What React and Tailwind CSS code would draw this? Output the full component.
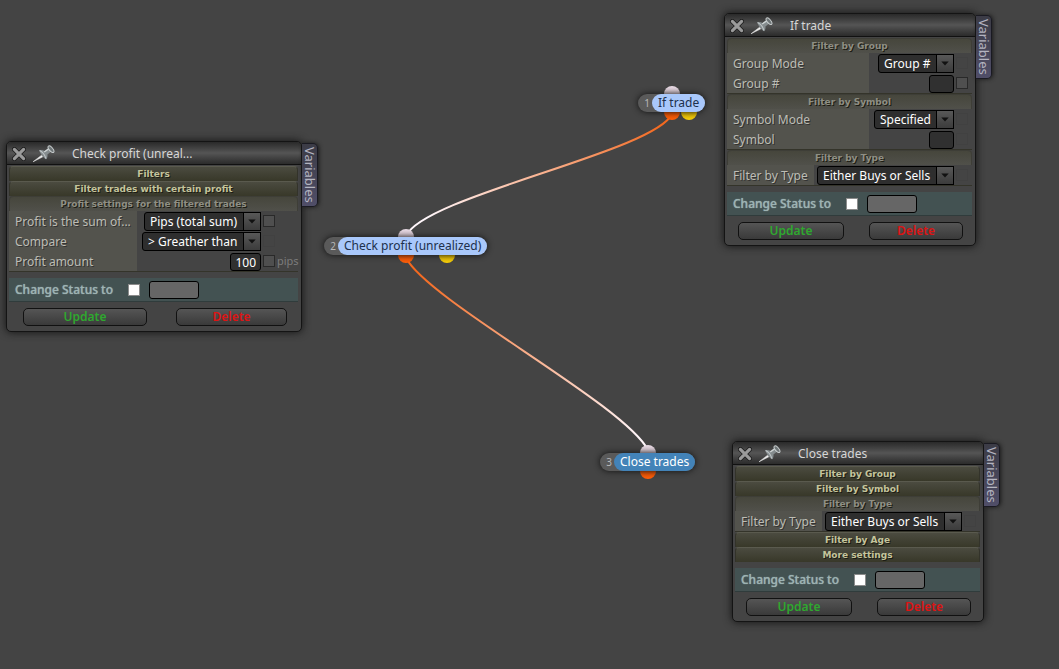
import React from 'react';
import clsx from 'clsx';

const windows = [
  {
    id: 'profit',
    title: 'Check profit (unreal...',
    position: 'left-[6px] top-[141px]',
    width: 'w-[296px]',
    sideWidth: 'w-[37px]',
    groups: [
      { title: 'Filters', rows: [] },
      { title: 'Filter trades with certain profit', rows: [] },
      {
        title: 'Profit settings for the filtered trades',
        labelWidth: 'w-32',
        rows: [
          { label: 'Profit is the sum of...', type: 'select', value: 'Pips (total sum)', check: true },
          { label: 'Compare', type: 'select', value: '> Greather than' },
          { label: 'Profit amount', type: 'text', value: '100', check: true, unit: 'pips' },
        ],
      },
    ],
    buttons: ['w-[124px]', 'w-[111px]'],
    buttonRow: 'pl-[14px] pr-[11px]',
  },
  {
    id: 'if',
    title: 'If trade',
    position: 'left-[724px] top-[13px]',
    width: 'w-[252px]',
    sideWidth: 'w-[18px]',
    groups: [
      {
        title: 'Filter by Group',
        labelWidth: 'w-[142px]',
        rows: [
          { label: 'Group Mode', type: 'select', value: 'Group #' },
          { label: 'Group #', type: 'text', value: '', check: true },
        ],
      },
      {
        title: 'Filter by Symbol',
        labelWidth: 'w-[142px]',
        rows: [
          { label: 'Symbol Mode', type: 'select', value: 'Specified' },
          { label: 'Symbol', type: 'text', value: '' },
        ],
      },
      {
        title: 'Filter by Type',
        labelWidth: 'w-[87px]',
        rows: [{ label: 'Filter by Type', type: 'select', value: 'Either Buys or Sells' }],
      },
    ],
    buttons: ['w-[106px]', 'w-[94px]'],
    buttonRow: 'pl-[11px] pr-[9px]',
  },
  {
    id: 'close',
    title: 'Close trades',
    position: 'left-[732px] top-[441px]',
    width: 'w-[252px]',
    sideWidth: 'w-[18px]',
    groups: [
      { title: 'Filter by Group', rows: [] },
      { title: 'Filter by Symbol', rows: [] },
      {
        title: 'Filter by Type',
        labelWidth: 'w-[87px]',
        rows: [{ label: 'Filter by Type', type: 'select', value: 'Either Buys or Sells' }],
      },
      { title: 'Filter by Age', rows: [] },
      { title: 'More settings', rows: [] },
    ],
    buttons: ['w-[106px]', 'w-[94px]'],
    buttonRow: 'pl-[11px] pr-[9px]',
  },
];

const nodes = [
  { id: 1, label: 'If trade', position: 'left-[638px] top-[94px]', ports: 'left-[26px]', extra: 'left-[43px]' },
  { id: 2, label: 'Check profit (unrealized)', position: 'left-[324px] top-[237px]', ports: 'left-[74px]', extra: 'left-[115px]' },
  { id: 3, label: 'Close trades', position: 'left-[600px] top-[453px]', ports: 'left-[40px]', solid: true },
];

const CloseIcon = () => (
  <svg width="14" height="14" viewBox="0 0 14 14" aria-hidden="true">
    <path d="M2.4 2.4 11.6 11.6M11.6 2.4 2.4 11.6" stroke="#1c1c1c" strokeWidth="4.8" strokeLinecap="round" />
    <path d="M2.4 2.4 11.6 11.6M11.6 2.4 2.4 11.6" stroke="#9b9b9b" strokeWidth="3.2" strokeLinecap="round" />
  </svg>
);

const PinIcon = () => (
  <svg width="24" height="18" viewBox="0 0 24 18" aria-hidden="true">
    <path d="M1 16.8 9.6 10.2 10.9 11.8Z" fill="#f2f2f2" stroke="#d8d8d8" strokeWidth="0.6" />
    <path d="M7.2 5.2C9 4.6 11 5 12.6 6L17 3 19.4 6.2 15.4 9.4C15.8 11.2 15.4 12.8 14.2 14.2 12.6 13.8 8.4 9.4 7.2 5.2Z" fill="#858c8e" />
    <path d="M7.6 5.6C9.8 6.6 12.8 10 14 13.6" stroke="#bfc5c7" strokeWidth="1.1" fill="none" />
    <path d="M12.2 7 17 3.6" stroke="#cfd4d5" strokeWidth="1.3" />
    <ellipse cx="19" cy="4.2" rx="1.8" ry="4" transform="rotate(-40 19 4.2)" fill="#6e7577" stroke="#c9cecf" strokeWidth="1" />
  </svg>
);

const MiniCheck = ({ label, dim }) => (
  <input
    type="checkbox"
    aria-label={label}
    className={clsx(
      'h-3 w-3 shrink-0 appearance-none border',
      dim ? 'border-[#414141] bg-[#444444]' : 'border-[#292929] bg-[#4f4f4f]'
    )}
  />
);

const Field = ({ id, row, labelWidth, sideWidth }) => (
  <div className="flex h-5 items-stretch">
    <label
      htmlFor={id}
      className={clsx(
        'shrink-0 bg-[#53534d] pl-[6px] text-[12px] leading-[21px] whitespace-nowrap text-[#bdbdb5] [text-shadow:1px_1px_0_#333]',
        labelWidth
      )}
    >
      {row.label}
    </label>
    <div className="flex grow items-end justify-end">
      {row.type === 'select' ? (
        <div className="relative flex">
          <select
            id={id}
            className="h-[19px] appearance-none rounded-[3px] border border-black bg-[#2e2e2e] pr-[22px] pl-[5px] text-[12px] leading-4 text-white"
          >
            <option>{row.value}</option>
          </select>
          <span className="pointer-events-none absolute inset-y-0 right-0 flex w-[18px] items-center justify-center border border-black bg-linear-to-b from-[#585858] to-[#3c3c3c]">
            <svg width="8" height="5" viewBox="0 0 8 5" aria-hidden="true">
              <path d="M0.3 0.5H7.7L4 4.6Z" fill="#111" />
            </svg>
          </span>
        </div>
      ) : (
        <input
          id={id}
          type="text"
          defaultValue={row.value}
          className={clsx(
            'h-[18px] rounded-[3px] border border-black bg-[#303030] px-1 text-right text-[12px] leading-4 text-white',
            row.value ? 'w-[31px]' : 'w-[25px]'
          )}
        />
      )}
    </div>
    <div className={clsx('flex shrink-0 items-center gap-[2px] pl-[2px]', sideWidth)}>
      <MiniCheck label={`${row.label} variable`} dim={!row.check} />
      {row.unit && <span className="text-[11px] leading-4 text-[#7c7c7c]">{row.unit}</span>}
    </div>
  </div>
);

const Group = ({ windowId, group, sideWidth }) => {
  const open = group.rows.length > 0;
  return (
    <section className={clsx(open && 'border-b border-[#34342a]')}>
      <h3
        className={clsx(
          "h-[15px] rounded-t-[4px] border border-b-0 bg-linear-to-b text-center font-['DejaVu_Sans',sans-serif] text-[9px] leading-[14px] font-bold [text-shadow:1px_1px_0_#1c1c14]",
          open
            ? 'border-[#3e3e37] from-[#46463c] to-[#50504a] text-[#8f8f84]'
            : 'border-[#33332a] border-t-[#5a5a4e] from-[#4b4b40] to-[#383829] text-[#c4c49c]'
        )}
      >
        {group.title}
      </h3>
      {group.rows.map((row, i) => (
        <Field
          key={row.label}
          id={`${windowId}-${group.title.replace(/\s/g, '')}-${i}`}
          row={row}
          labelWidth={group.labelWidth}
          sideWidth={sideWidth}
        />
      ))}
    </section>
  );
};

const SettingsWindow = ({ id, title, position, width, sideWidth, groups, buttons, buttonRow }) => (
  <div className={clsx('absolute flex items-start', position)}>
    <div className={clsx('rounded-[5px] border border-[#141414] bg-[#444444] shadow-[0_0_8px_#111]', width)}>
      <header className="flex h-[23px] items-center rounded-t-[4px] border-b border-[#111] bg-linear-to-b from-[#2a2a2a] via-[#555555] to-[#2b2b2b] pt-[2px] pl-[5px]">
        <button type="button" aria-label="Close">
          <CloseIcon />
        </button>
        <button type="button" aria-label="Pin" className="ml-[6px]">
          <PinIcon />
        </button>
        <h2 className="ml-4 text-[12px] leading-5 text-[#d6d6d6]">{title}</h2>
      </header>
      <div className="pt-px pr-[3px] pb-[5px] pl-[2px]">
        {groups.map((group) => (
          <Group key={group.title} windowId={id} group={group} sideWidth={sideWidth} />
        ))}
        <div className="mt-[6px] flex h-6 items-center border-b border-[#303c3c] bg-[#435252] pl-[6px]">
          <label
            htmlFor={`${id}-status`}
            className="w-[113px] text-[12px] leading-5 font-medium text-[#9db3b3] [text-shadow:0_0_1px_#9db3b3]"
          >
            Change Status to
          </label>
          <input
            id={`${id}-status`}
            type="checkbox"
            className="h-3 w-3 appearance-none border border-[#8c8c8c] bg-white checked:bg-[#3b82f6]"
          />
          <input
            type="text"
            aria-label="Status"
            className="ml-[9px] h-[18px] w-[50px] rounded-[3px] border border-black bg-[#666666] px-1 text-[12px] text-white"
          />
        </div>
        <div className={clsx('mt-[6px] flex justify-between', buttonRow)}>
          <button
            type="button"
            className={clsx(
              'h-[18px] rounded-[5px] border border-[#111] bg-linear-to-b from-[#555555] to-[#3a3a3a] text-[12px] leading-4 font-semibold text-[#2fa82f]',
              buttons[0]
            )}
          >
            Update
          </button>
          <button
            type="button"
            className={clsx(
              'h-[18px] rounded-[5px] border border-[#111] bg-linear-to-b from-[#555555] to-[#3a3a3a] text-[12px] leading-4 font-semibold text-[#dc1414]',
              buttons[1]
            )}
          >
            Delete
          </button>
        </div>
      </div>
    </div>
    <button
      type="button"
      className="mt-[2px] h-16 w-4 rounded-r-[5px] border border-l-0 border-[#1a1a22] bg-linear-to-b from-[#3c3c46] to-[#504e68] text-[13px] leading-[14px] text-[#b4b4c0] shadow-[1px_0_4px_#1a1a1a] [writing-mode:vertical-rl]"
    >
      Variables
    </button>
  </div>
);

const Node = ({ id, label, position, ports, extra, solid }) => (
  <div className={clsx('absolute', position)}>
    <span className={clsx('absolute -top-2 h-4 w-4 rounded-full bg-linear-to-b from-[#eadce6] to-[#b9a9b4]', ports)} />
    <span className={clsx('absolute -bottom-2 h-4 w-4 rounded-full bg-linear-to-b from-[#c94300] to-[#ff5f0a]', ports)} />
    {extra && (
      <span className={clsx('absolute -bottom-2 h-4 w-4 rounded-full bg-linear-to-b from-[#c09a00] to-[#f7cf0a]', extra)} />
    )}
    <div className="relative flex h-[18px] rounded-full bg-[#5a5a5a] shadow-[0_0_6px_#111]">
      <span className="w-[14px] pl-1 text-center text-[10px] leading-[18px] text-[#b8b8b8]">{id}</span>
      <span
        className={clsx(
          'rounded-full px-[6px] text-[12px] leading-[18px] whitespace-nowrap',
          solid ? 'bg-[#4383b8] text-white' : 'bg-[#a9c8fb] text-[#20304c]'
        )}
      >
        {label}
      </span>
    </div>
  </div>
);

const Connections = () => (
  <svg className="absolute top-0 left-0 h-full w-full" aria-hidden="true">
    <defs>
      <linearGradient id="wire-1" gradientUnits="userSpaceOnUse" x1="660" y1="120" x2="430" y2="222">
        <stop offset="0" stopColor="#f4691f" />
        <stop offset="1" stopColor="#fff6fa" />
      </linearGradient>
      <linearGradient id="wire-2" gradientUnits="userSpaceOnUse" x1="420" y1="270" x2="640" y2="440">
        <stop offset="0" stopColor="#f4691f" />
        <stop offset="1" stopColor="#fff6fa" />
      </linearGradient>
    </defs>
    <path d="M672 114C654 152 424 196 406 236" fill="none" stroke="url(#wire-1)" strokeWidth="2" />
    <path d="M406 258C430 302 624 404 648 450" fill="none" stroke="url(#wire-2)" strokeWidth="2" />
  </svg>
);

const App = () => {
  return (
    <main className="relative min-h-screen overflow-hidden bg-[#444444] font-['Noto_Sans','Open_Sans',sans-serif]">
      <Connections />
      {nodes.map((node) => (
        <Node key={node.id} {...node} />
      ))}
      {windows.map((item) => (
        <SettingsWindow key={item.id} {...item} />
      ))}
    </main>
  );
};

export default App;
